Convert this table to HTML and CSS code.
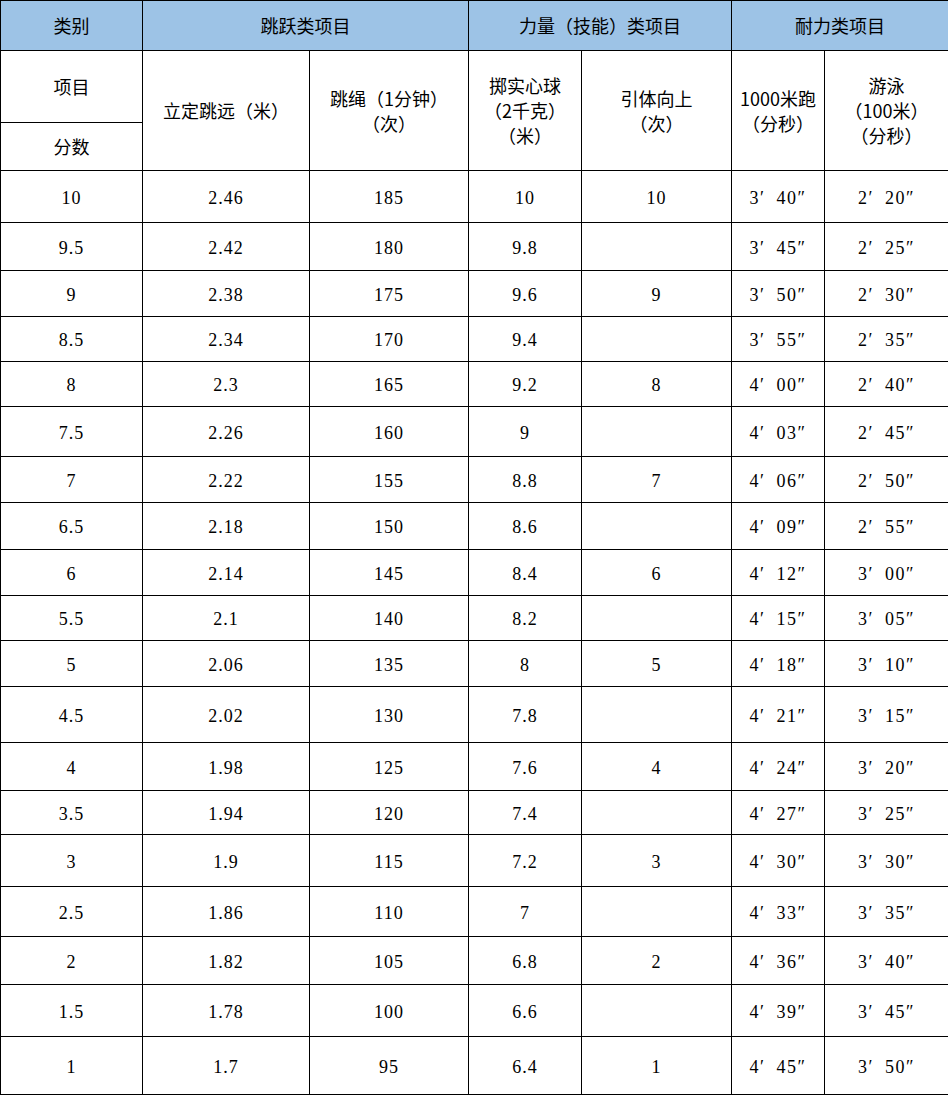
FILE: index.html
```html
<!DOCTYPE html>
<html lang="zh-CN">
<head>
<meta charset="utf-8">
<title>体育评分表</title>
<link rel="stylesheet" href="styles.css">
</head>
<body>
<table class="score">
  <colgroup>
    <col class="c1"><col class="c2"><col class="c3"><col class="c4"><col class="c5"><col class="c6"><col class="c7">
  </colgroup>
  <thead>
    <tr class="head h50">
      <th>类别</th>
      <th colspan="2">跳跃类项目</th>
      <th colspan="2">力量（技能）类项目</th>
      <th colspan="2">耐力类项目</th>
    </tr>
    <tr class="sub h72">
      <th>项目</th>
      <th rowspan="2">立定跳远（米）</th>
      <th rowspan="2">跳绳（1分钟）<br>（次）</th>
      <th rowspan="2">掷实心球<br>（2千克）<br>（米）</th>
      <th rowspan="2">引体向上<br>（次）</th>
      <th rowspan="2">1000米跑<br>（分秒）</th>
      <th rowspan="2">游泳<br>（100米）<br>（分秒）</th>
    </tr>
    <tr class="sub h48">
      <th>分数</th>
    </tr>
  </thead>
  <tbody>
    <tr class="h52"><td>10</td><td>2.46</td><td>185</td><td>10</td><td>10</td><td class="t">3′ 40″</td><td class="t">2′ 20″</td></tr>
    <tr class="h48"><td>9.5</td><td>2.42</td><td>180</td><td>9.8</td><td></td><td class="t">3′ 45″</td><td class="t">2′ 25″</td></tr>
    <tr class="h46"><td>9</td><td>2.38</td><td>175</td><td>9.6</td><td>9</td><td class="t">3′ 50″</td><td class="t">2′ 30″</td></tr>
    <tr class="h45"><td>8.5</td><td>2.34</td><td>170</td><td>9.4</td><td></td><td class="t">3′ 55″</td><td class="t">2′ 35″</td></tr>
    <tr class="h45"><td>8</td><td>2.3</td><td>165</td><td>9.2</td><td>8</td><td class="t">4′ 00″</td><td class="t">2′ 40″</td></tr>
    <tr class="h50"><td>7.5</td><td>2.26</td><td>160</td><td>9</td><td></td><td class="t">4′ 03″</td><td class="t">2′ 45″</td></tr>
    <tr class="h46"><td>7</td><td>2.22</td><td>155</td><td>8.8</td><td>7</td><td class="t">4′ 06″</td><td class="t">2′ 50″</td></tr>
    <tr class="h47"><td>6.5</td><td>2.18</td><td>150</td><td>8.6</td><td></td><td class="t">4′ 09″</td><td class="t">2′ 55″</td></tr>
    <tr class="h46"><td>6</td><td>2.14</td><td>145</td><td>8.4</td><td>6</td><td class="t">4′ 12″</td><td class="t">3′ 00″</td></tr>
    <tr class="h45"><td>5.5</td><td>2.1</td><td>140</td><td>8.2</td><td></td><td class="t">4′ 15″</td><td class="t">3′ 05″</td></tr>
    <tr class="h46"><td>5</td><td>2.06</td><td>135</td><td>8</td><td>5</td><td class="t">4′ 18″</td><td class="t">3′ 10″</td></tr>
    <tr class="h56"><td>4.5</td><td>2.02</td><td>130</td><td>7.8</td><td></td><td class="t">4′ 21″</td><td class="t">3′ 15″</td></tr>
    <tr class="h48"><td>4</td><td>1.98</td><td>125</td><td>7.6</td><td>4</td><td class="t">4′ 24″</td><td class="t">3′ 20″</td></tr>
    <tr class="h44"><td>3.5</td><td>1.94</td><td>120</td><td>7.4</td><td></td><td class="t">4′ 27″</td><td class="t">3′ 25″</td></tr>
    <tr class="h52"><td>3</td><td>1.9</td><td>115</td><td>7.2</td><td>3</td><td class="t">4′ 30″</td><td class="t">3′ 30″</td></tr>
    <tr class="h50"><td>2.5</td><td>1.86</td><td>110</td><td>7</td><td></td><td class="t">4′ 33″</td><td class="t">3′ 35″</td></tr>
    <tr class="h48"><td>2</td><td>1.82</td><td>105</td><td>6.8</td><td>2</td><td class="t">4′ 36″</td><td class="t">3′ 40″</td></tr>
    <tr class="h52"><td>1.5</td><td>1.78</td><td>100</td><td>6.6</td><td></td><td class="t">4′ 39″</td><td class="t">3′ 45″</td></tr>
    <tr class="h58"><td>1</td><td>1.7</td><td>95</td><td>6.4</td><td>1</td><td class="t">4′ 45″</td><td class="t">3′ 50″</td></tr>
  </tbody>
</table>
</body>
</html>
```
FILE: styles.css
```css
html, body {
  margin: 0;
  padding: 0;
  background: #ffffff;
}

.score {
  width: 948px;
  table-layout: fixed;
  border-collapse: collapse;
  color: #000;
}

.c1 { width: 142px; }
.c2 { width: 167px; }
.c3 { width: 159px; }
.c4 { width: 113px; }
.c5 { width: 150px; }
.c6 { width: 93px; }
.c7 { width: 124px; }

.score th,
.score td {
  border: 1px solid #000;
  padding: 0;
  text-align: center;
  vertical-align: middle;
}

.score th {
  font-family: "Noto Sans CJK SC", "DejaVu Sans", sans-serif;
  font-weight: 400;
  font-size: 18px;
  line-height: 25px;
}

.head th {
  background: #9dc3e6;
}

.score td {
  font-family: "Liberation Serif", "Noto Sans CJK SC", serif;
  font-size: 18px;
  line-height: 22px;
  letter-spacing: 1px;
  padding-top: 2px;
}

.score td.t {
  letter-spacing: 1.5px;
  word-spacing: 5px;
  padding-left: 0;
}

.h44 { height: 44px; }
.h45 { height: 45px; }
.h46 { height: 46px; }
.h47 { height: 47px; }
.h48 { height: 48px; }
.h50 { height: 50px; }
.h52 { height: 52px; }
.h56 { height: 56px; }
.h58 { height: 58px; }
.h72 { height: 72px; }
```
